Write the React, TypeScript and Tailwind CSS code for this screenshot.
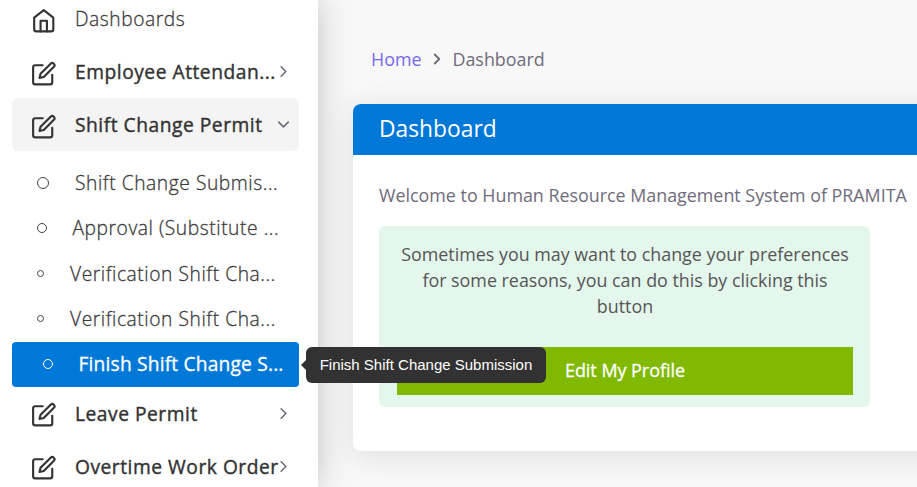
import React from "react";

const EditIcon = () => (
  <svg className="h-[25.5px] w-[25.5px] shrink-0" viewBox="0 0 24 24" fill="none" stroke="currentColor" strokeWidth="2" strokeLinecap="round" strokeLinejoin="round">
    <path d="M11 4H4a2 2 0 0 0-2 2v14a2 2 0 0 0 2 2h14a2 2 0 0 0 2-2v-7" />
    <path d="M18.5 2.5a2.121 2.121 0 0 1 3 3L12 15l-4 1 1-4 9.5-9.5z" />
  </svg>
);

const HomeIcon = () => (
  <svg className="h-[25.5px] w-[25.5px] shrink-0" viewBox="0 0 24 24" fill="none" stroke="currentColor" strokeWidth="2" strokeLinecap="round" strokeLinejoin="round">
    <path d="M3 9l9-7 9 7v11a2 2 0 0 1-2 2H5a2 2 0 0 1-2-2z" />
    <polyline points="9 22 9 12 15 12 15 22" />
  </svg>
);

const Chevron = ({ className }: { className: string }) => (
  <svg className={className} viewBox="0 0 24 24" fill="none" stroke="currentColor" strokeWidth="2" strokeLinecap="round" strokeLinejoin="round">
    <polyline points="9 18 15 12 9 6" />
  </svg>
);

type ItemProps = { label: string; text: string; state?: "open" | "closed"; home?: boolean };

const MenuItem = ({ label, text, state, home }: ItemProps) => (
  <li className={`flex h-[53px] items-center rounded-md pr-[6px] pl-[18.5px] ${state === "open" ? "bg-[#f4f4f4]" : ""}`}>
    <span className="mt-[3.5px] flex text-[#333]">{home ? <HomeIcon /> : <EditIcon />}</span>
    <span className={`ml-[19px] flex-1 pt-[2px] whitespace-nowrap ${text}`}>{label}</span>
    {state && <Chevron className={`-ml-6 h-[19px] w-[19px] shrink-0 text-[#6e6b7b] ${state === "open" ? "rotate-90" : ""}`} />}
  </li>
);

const light = "text-[19.2px] font-light tracking-[0.57px] text-[#3a3a3a] [-webkit-text-stroke:0.3px_#3a3a3a]";
const medium = "text-[19.2px] tracking-[0.53px] text-[#333] [-webkit-text-stroke:0.4px_#333]";

const subItems = [
  { label: "Shift Change Submis...", dot: "h-3 w-3", gap: "ml-[26px] pt-[2px]" },
  { label: "Approval (Substitute ...", dot: "h-[10px] w-[10px]", gap: "ml-[25.5px] pt-px" },
  { label: "Verification Shift Cha...", dot: "h-[7px] w-[7px]", gap: "ml-[26px] pt-[2px]" },
  { label: "Verification Shift Cha...", dot: "h-[7px] w-[7px]", gap: "ml-[26px] pt-[2px]" },
];

export default function App() {
  return (
    <div className="relative flex h-[487px] w-[917px] overflow-hidden bg-[#f8f8f8] font-['Open_Sans',sans-serif]">
      <aside className="z-10 w-[318px] shrink-0 bg-white px-3 shadow-[0_0_30px_0_rgba(34,41,47,0.25)]">
        <ul className="-mt-[8px] w-[287px]">
          <MenuItem home label="Dashboards" text={light} />
          <MenuItem label="Employee Attendan..." text={medium} state="closed" />
          <MenuItem label="Shift Change Permit" text={medium} state="open" />
          <li className="pt-[9px]">
            <ul>
              {subItems.map((s, i) => (
                <li key={i} className="flex h-[45.4px] items-center pl-[25px]">
                  <span className={`shrink-0 rounded-full border border-[#444] ${s.dot}`} />
                  <span className={`whitespace-nowrap ${light} ${s.gap}`}>{s.label}</span>
                </li>
              ))}
              <li className="flex h-[45px] items-center rounded bg-[#0078d8] pl-[31px]">
                <span className="h-[10px] w-[10px] shrink-0 rounded-full border border-white" />
                <span className="ml-[25.5px] whitespace-nowrap text-[19.2px] tracking-[0.18px] text-white [-webkit-text-stroke:0.3px_white]">Finish Shift Change S...</span>
              </li>
            </ul>
          </li>
          <MenuItem label="Leave Permit" text={medium} state="closed" />
          <MenuItem label="Overtime Work Order" text={medium} state="closed" />
        </ul>
      </aside>
      <main className="flex-1 pl-[35px]">
        <nav className="ml-[18px] flex h-[104px] items-center pt-[14px] text-[17.87px] text-[#6e6b7b]">
          <span className="text-[#7367f0]">Home</span>
          <Chevron className="mx-[6.5px] h-[18px] w-[18px] stroke-[2.5]" />
          <span>Dashboard</span>
        </nav>
        <section className="h-[347px] w-[600px] rounded-lg bg-white shadow-[0_5px_30px_0_rgba(34,41,47,0.12)]">
          <h4 className="flex h-[51px] items-center rounded-t-lg bg-[#0078d8] pl-[26px] text-[22.8px] text-white">Dashboard</h4>
          <div className="px-[26px] pt-[27px]">
            <p className="whitespace-nowrap text-[17.87px] leading-[26px] text-[#6e6b7b]">Welcome to Human Resource Management System of PRAMITA</p>
            <div className="mt-[18px] h-[181px] w-[491px] rounded-md bg-[#e4f7ec] pr-[17px] pl-[18px] pt-[15px]">
              <p className="text-center text-[17.87px] leading-[26px] text-[#555]">
                Sometimes you may want to change your preferences<br />for some reasons, you can do this by clicking this<br />button
              </p>
              <button className="mt-[28px] flex h-12 w-full items-center justify-center bg-[#80b900] pb-[2px] text-[17.9px] text-white [-webkit-text-stroke:0.3px_white]">Edit My Profile</button>
            </div>
          </div>
        </section>
      </main>
      <div className="absolute top-[347px] left-[306px] z-20 flex h-9 w-[240px] items-center justify-center rounded-md bg-[#323232] font-['Liberation_Sans',Arial,sans-serif] text-[15px] text-white">
        <span className="absolute top-[13px] -left-[5px] h-0 w-0 border-y-[5px] border-r-[5px] border-y-transparent border-r-[#323232]" />
        Finish Shift Change Submission
      </div>
    </div>
  );
}
